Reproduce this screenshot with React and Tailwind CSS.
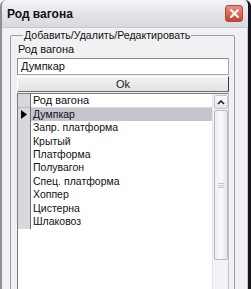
import React from "react";

const rows = [
  "Думпкар",
  "Запр. платформа",
  "Крытый",
  "Платформа",
  "Полувагон",
  "Спец. платформа",
  "Хоппер",
  "Цистерна",
  "Шлаковоз",
];

export default function App() {
  return (
    <div
      className="w-[251px] h-[289px] overflow-hidden flex flex-col bg-[#f1f1f3] border-l-[2px] border-l-[#8e8e96] border-r-[3px] border-r-[#15151c] rounded-t-[6px]"
      style={{ fontFamily: '"Liberation Sans", Arial, sans-serif' }}
    >
      {/* Title bar */}
      <div className="h-[28px] shrink-0 flex items-center justify-between pl-[5px] pr-[5px] bg-gradient-to-b from-[#f4f4f7] via-[#e4e4ea] to-[#d8d8e0] border-b border-[#c8c8d0] rounded-t-[6px]">
        <span className="text-[12px] font-bold text-[#111] leading-none">Род вагона</span>
        <div className="w-[18px] h-[17px] rounded-[3px] border border-[#b04a3a] bg-gradient-to-b from-[#ec8f7c] to-[#c6432f] flex items-center justify-center">
          <svg width="11" height="11" viewBox="0 0 11 11">
            <path d="M2 2 L9 9 M9 2 L2 9" stroke="#fff" strokeWidth="2" strokeLinecap="round" />
          </svg>
        </div>
      </div>

      {/* Body */}
      <div className="flex-1 flex pl-[8px] pr-[5px] pt-[1px] border-r border-r-[#c4c4cc]">
        <fieldset className="w-[225px] h-[300px] border border-[#9c9ca6] rounded-[2px] pl-[6px] pr-[5px] shrink-0">
          <legend className="ml-[6px] px-[1px] text-[10.6px] leading-[13px] whitespace-nowrap text-[#111]">
            Добавить/Удалить/Редактировать
          </legend>
          <div className="text-[11px] leading-[13px] text-[#111] pl-[1px] mt-[1px]">Род вагона</div>
          <div className="mt-[2px] h-[17px] bg-white border border-[#a4a8b0] border-t-[#8a8e96] border-l-[#8a8e96] flex items-center pl-[3px] text-[11px] text-[#111]">
            Думпкар
          </div>
          <button className="mt-[1px] w-full h-[16px] flex items-center justify-center bg-gradient-to-b from-[#f4f4f4] to-[#e2e2e2] border border-t-white border-l-white border-r-[#3c3c3c] border-b-[#6c6c6c] text-[11px] text-[#222] leading-none">
            Ok
          </button>
          {/* Grid */}
          <div className="mt-[1px] h-[220px] flex bg-white border border-[#7a7a80] border-r-[#c0c0c8]">
            <div className="w-[13px] shrink-0 self-start bg-[#d7d7dc] border-r border-r-[#6e6e74] flex flex-col">
              <div className="h-[14px] border-b border-b-[#b8b8be]" />
              {rows.map((r, i) => (
                <div key={r} className="h-[13.4px] flex items-center pl-[3px]">
                  {i === 0 && (
                    <svg width="6" height="9" viewBox="0 0 6 9">
                      <polygon points="0,0 6,4.5 0,9" fill="#000" />
                    </svg>
                  )}
                </div>
              ))}
            </div>
            <div className="flex-1 flex flex-col">
              <div className="h-[14px] flex items-center pl-[2px] text-[11px] whitespace-nowrap text-[#111] border-b border-b-[#d8d8dc]">
                Род вагона
              </div>
              {rows.map((r, i) => (
                <div
                  key={r}
                  className={
                    i === 0
                      ? "h-[13.4px] flex items-center pl-[2px] text-[10.5px] whitespace-nowrap text-[#111] bg-[#c5c5cd]"
                      : "h-[13.4px] flex items-center pl-[2px] text-[10.5px] whitespace-nowrap text-[#111]"
                  }
                >
                  {r}
                </div>
              ))}
            </div>
            {/* Scrollbar */}
            <div className="w-[16px] shrink-0 bg-[#f3f3f7] border-l border-l-[#e4e4ea] flex flex-col items-center pt-[1px]">
              <div className="w-[14px] h-[14px] rounded-[2px] border border-[#c4c4d0] bg-gradient-to-b from-[#fbfbfd] to-[#e4e4ec] flex items-center justify-center">
                <svg width="8" height="5" viewBox="0 0 8 5">
                  <path d="M1 4 L4 1 L7 4" stroke="#222" strokeWidth="1.6" fill="none" />
                </svg>
              </div>
              <div className="mt-[1px] w-[14px] h-[150px] rounded-[2px] border border-[#b6b6c4] bg-gradient-to-r from-[#eeeef4] via-[#fafafd] to-[#e6e6ee] flex items-center justify-center">
                <div className="flex flex-col gap-[1px]">
                  <div className="w-[6px] h-[1px] bg-[#c4c4d0]" />
                  <div className="w-[6px] h-[1px] bg-[#c4c4d0]" />
                  <div className="w-[6px] h-[1px] bg-[#c4c4d0]" />
                </div>
              </div>
            </div>
          </div>
        </fieldset>
      </div>
    </div>
  );
}
